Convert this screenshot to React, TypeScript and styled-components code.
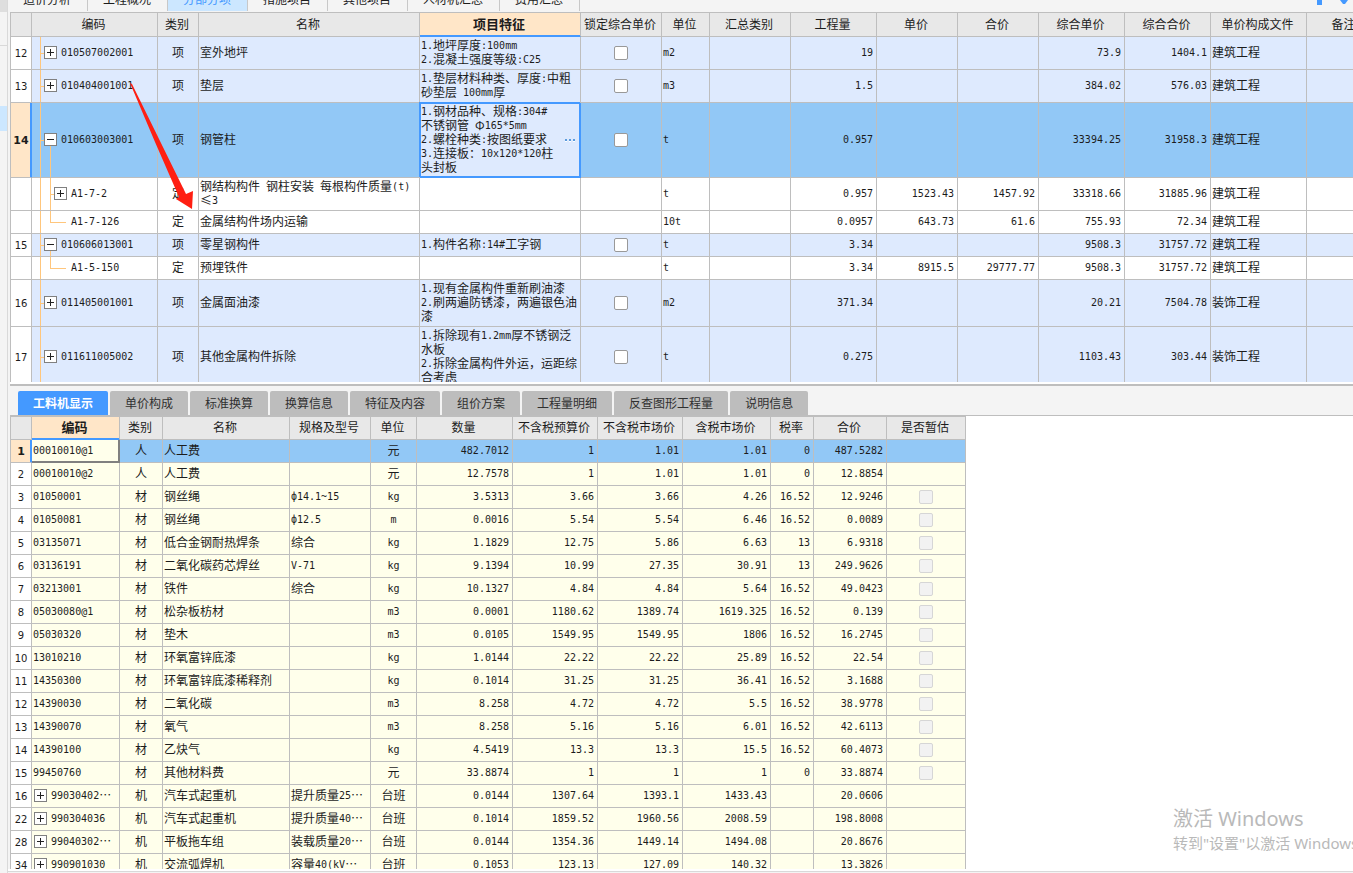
import React from "react";
import styled, { createGlobalStyle, css } from "styled-components";

const LINE = "#bebebe";
const BLUE = "#4499ff";
const TREE = "#ffc67c";
const PEACH = "#ffe6c8";
const CJK = '"Noto Sans CJK SC", sans-serif';
const MONO = '"DejaVu Sans Mono", "Liberation Mono", monospace';

const GlobalStyle = createGlobalStyle`
  * { box-sizing: border-box; }
  body {
    margin: 0;
    overflow: hidden;
    background: #f4f4f4;
    color: #1c1c1c;
    font: 12px/14px ${CJK};
  }
  button { font: inherit; color: inherit; border: 0; padding: 0; background: none; }
`;

/* ---------- page frame ---------- */

const Shell = styled.div`
  position: relative;
  display: flex;
  height: 100vh;
  overflow: hidden;
`;

const SideRail = styled.div`
  flex: 0 0 8px;
  border-right: 1px solid #d9d9d9;
  background: #f4f4f4;
`;

const RailBlock = styled.div<{ $h: number; $bg?: string; $line?: boolean }>`
  height: ${(p) => p.$h}px;
  background: ${(p) => p.$bg ?? "transparent"};
  border-bottom: ${(p) => (p.$line ? "1px solid #d9d9d9" : "0")};
`;

const Main = styled.main`
  flex: 1;
  min-width: 0;
  display: flex;
  flex-direction: column;
`;

const TopStrip = styled.div`
  flex: 0 0 12px;
  display: flex;
  justify-content: space-between;
  overflow: hidden;
`;

const TopTabs = styled.nav`
  display: flex;
  align-items: flex-end;
  height: 11px;
`;

const TopTab = styled.button<{ $active?: boolean }>`
  height: 24px;
  padding: 0 16px 0 15px;
  border-right: 1px solid #c8c8c8;
  background: ${(p) => (p.$active ? "#cce7ff" : "transparent")};
  color: ${(p) => (p.$active ? BLUE : "inherit")};
`;

const StripIcons = styled.svg`
  width: 36px;
  height: 8px;
`;

const UpperPane = styled.section`
  flex: 0 0 370px;
  margin-left: 2px;
  overflow: hidden;
  background: #fff;
`;

const Splitter = styled.div`
  flex: 0 0 4px;
  margin-left: 2px;
  border-top: 2px solid #fff;
  border-bottom: 2px solid ${LINE};
`;

const DetailTabs = styled.div`
  flex: 0 0 30px;
  display: flex;
  align-items: flex-end;
  gap: 2px;
  margin-left: 2px;
  padding: 5px 8px 0;
  border-bottom: 1px solid ${LINE};
`;

const DetailTab = styled.button<{ $active?: boolean }>`
  height: 24px;
  padding: 0 15px;
  border-radius: 2px 2px 0 0;
  background: ${(p) => (p.$active ? BLUE : "#bdbdbd")};
  color: ${(p) => (p.$active ? "#fff" : "#303030")};
  font-weight: ${(p) => (p.$active ? 700 : 400)};
`;

const LowerPane = styled.section`
  flex: 1;
  min-height: 0;
  margin-left: 2px;
  overflow: hidden;
  background: #fff;
`;

const StatusEdge = styled.footer`
  flex: 0 0 4px;
  border-top: 2px solid #fff;
  background: linear-gradient(#d9d9d9 1px, #f4f4f4 1px);
`;

/* ---------- tables ---------- */

const Grid = styled.table<{ $w: number }>`
  width: ${(p) => p.$w}px;
  table-layout: fixed;
  border-collapse: separate;
  border-spacing: 0;
  border-left: 1px solid ${LINE};
  border-top: 1px solid ${LINE};
`;

const Th = styled.th<{ $active?: boolean }>`
  height: 24px;
  padding: 0 2px 2px 0;
  border-right: 1px solid ${LINE};
  border-bottom: 1px solid ${LINE};
  background: #e8e8e8;
  font-weight: 400;
  white-space: nowrap;
  ${(p) =>
    p.$active &&
    css`
      border-bottom-color: ${BLUE};
      box-shadow: inset 0 -1px ${BLUE};
      background: ${PEACH};
      font-size: 13px;
      font-weight: 700;
    `}
`;

const LowerTh = styled(Th)`
  height: 23px;
`;

type Tone = "item" | "white" | "current" | "cream";
const TONES: Record<Tone, string> = {
  item: "#deeafe",
  white: "#ffffff",
  current: "#92c8f6",
  cream: "#ffffeb",
};

const Row = styled.tr<{ $tone: Tone }>`
  background: ${(p) => TONES[p.$tone]};
`;

const Td = styled.td<{ $align?: "left" | "center" | "right" }>`
  height: 23px;
  padding: ${(p) => (p.$align === "center" ? "1px 1px 3px" : "1px 3px 3px 1px")};
  border-right: 1px solid ${LINE};
  border-bottom: 1px solid ${LINE};
  overflow: hidden;
  white-space: pre;
  vertical-align: middle;
  text-align: ${(p) => p.$align ?? "left"};
`;

const CheckTd = styled(Td)`
  padding: 2px 1px;
`;

const RowNo = styled(Td)<{ $current?: boolean }>`
  padding: 3px 0 1px;
  text-align: center;
  background: ${(p) => (p.$current ? PEACH : "#fff")};
  font: ${(p) => (p.$current ? "700 11px" : "400 10px")} / 14px "DejaVu Sans", sans-serif;
  ${(p) =>
    p.$current &&
    css`
      border-right-color: ${BLUE};
      box-shadow: inset -1px 0 ${BLUE};
    `}
`;

const EditingTd = styled(Td)`
  position: relative;
  overflow: visible;
  background: #deeafe;
  border-color: ${BLUE};
  box-shadow: -1px -1px ${BLUE}, inset 0 0 0 1px ${BLUE};
`;

const EditingBody = styled.div`
  display: flex;
  align-items: center;
  justify-content: space-between;
`;

const MoreButton = styled.button`
  width: 14px;
  height: 14px;
  svg { display: block; }
`;

const FocusTd = styled(Td)`
  background: #ffffeb;
  border-color: #808080;
  box-shadow: inset -1px -1px #808080;
`;

const linesFor = {
  root: {
    image: 2,
    pos: "8px 0, 8px 50%",
    size: "1px 100%, 4px 1px",
  },
  open: {
    image: 3,
    pos: "8px 0, 8px 50%, 18px 100%",
    size: "1px 100%, 4px 1px, 1px 50%",
  },
  child: {
    image: 3,
    pos: "8px 0, 18px 0, 18px 50%",
    size: "1px 100%, 1px 100%, 4px 1px",
  },
  leaf: {
    image: 3,
    pos: "8px 0, 18px 0, 18px 50%",
    size: "1px 100%, 1px 50%, 16px 1px",
  },
};
type Node = keyof typeof linesFor;

const INDENT: Record<Node, number> = { root: 12, open: 12, child: 22, leaf: 39 };

const TreeTd = styled(Td)<{ $node: Node }>`
  padding-left: ${(p) => INDENT[p.$node]}px;
  background-image: ${(p) =>
    Array(linesFor[p.$node].image).fill(`linear-gradient(${TREE}, ${TREE})`).join(", ")};
  background-position: ${(p) => linesFor[p.$node].pos};
  background-size: ${(p) => linesFor[p.$node].size};
  background-repeat: no-repeat;
`;

const TreeLabel = styled.div<{ $inset?: boolean }>`
  display: flex;
  align-items: center;
  gap: 4px;
  padding-left: ${(p) => (p.$inset ? 1 : 0)}px;
`;

const ToggleButton = styled.button`
  flex: none;
  width: 13px;
  height: 13px;
  border: 1px solid #808080;
  background: #fff;
  svg { display: block; }
`;

const Check = styled.input`
  appearance: none;
  display: block;
  width: 14px;
  height: 14px;
  margin: 0 auto;
  border: 1px solid #999;
  border-radius: 2px;
  background: #fff;
  &:disabled {
    border-color: #d6d6d6;
    background: #f2f2f2;
  }
`;

const Latin = styled.span`
  font: 10px/10px ${MONO};
  vertical-align: 1px;
`;

const Ellipsis = styled.span`
  display: inline-block;
`;

/* ---------- overlays ---------- */

const Arrow = styled.svg`
  position: absolute;
  left: 128px;
  top: 80px;
  width: 70px;
  height: 132px;
  pointer-events: none;
`;

const Watermark = styled.aside`
  position: absolute;
  right: 0;
  bottom: 20px;
  width: 180px;
  overflow: hidden;
  white-space: nowrap;
  color: #b9b9b9;
  font: 15px/20px "Noto Sans", ${CJK};
`;

const WatermarkTitle = styled.div`
  font-size: 20px;
  line-height: 28px;
`;

/* ---------- small pieces ---------- */

function Text({ children }: { children: string }) {
  const parts = children.split(/([\x20-\x7eф]+|…)/).filter(Boolean);
  return (
    <>
      {parts.map((p, i) => {
        if (p === "…") return <Ellipsis key={i}>{p}</Ellipsis>;
        if (/^[\x20-\x7eф]/.test(p)) return <Latin key={i}>{p}</Latin>;
        return <React.Fragment key={i}>{p}</React.Fragment>;
      })}
    </>
  );
}

function Lines({ lines }: { lines: string[] }) {
  return (
    <div>
      {lines.map((l) => (
        <div key={l}>
          <Text>{l}</Text>
        </div>
      ))}
    </div>
  );
}

function Toggle({ open }: { open?: boolean }) {
  return (
    <ToggleButton aria-label={open ? "收起" : "展开"}>
      <svg width="11" height="11" viewBox="0 0 11 11" shapeRendering="crispEdges" fill="#222">
        <rect x="2" y="5" width="7" height="1" />
        {!open && <rect x="5" y="2" width="1" height="7" />}
      </svg>
    </ToggleButton>
  );
}

/* ---------- data ---------- */

const TOP_TABS = ["造价分析", "工程概况", "分部分项", "措施项目", "其他项目", "人材机汇总", "费用汇总"];

const UPPER_COLS: [string, number][] = [
  ["", 21], ["编码", 126], ["类别", 41], ["名称", 221], ["项目特征", 161], ["锁定综合单价", 81],
  ["单位", 48], ["汇总类别", 81], ["工程量", 86], ["单价", 81], ["合价", 81], ["综合单价", 86],
  ["综合合价", 86], ["单价构成文件", 96], ["备注", 76],
];

interface Item {
  no?: string;
  node: Node;
  code: string;
  name: string[];
  feature?: string[];
  unit: string;
  qty: string;
  price?: string;
  total?: string;
  unitAll: string;
  totalAll: string;
  file: string;
  current?: boolean;
}

const ITEMS: Item[] = [
  { no: "12", node: "root", code: "010507002001", name: ["室外地坪"], feature: ["1.地坪厚度:100mm", "2.混凝土强度等级:C25"], unit: "m2", qty: "19", unitAll: "73.9", totalAll: "1404.1", file: "建筑工程" },
  { no: "13", node: "root", code: "010404001001", name: ["垫层"], feature: ["1.垫层材料种类、厚度:中粗", "砂垫层 100mm厚"], unit: "m3", qty: "1.5", unitAll: "384.02", totalAll: "576.03", file: "建筑工程" },
  { no: "14", node: "open", code: "010603003001", name: ["钢管柱"], feature: ["1.钢材品种、规格:304#", "不锈钢管 Φ165*5mm", "2.螺栓种类:按图纸要求", "3.连接板：10x120*120柱", "头封板"], unit: "t", qty: "0.957", unitAll: "33394.25", totalAll: "31958.3", file: "建筑工程", current: true },
  { node: "child", code: "A1-7-2", name: ["钢结构构件 钢柱安装 每根构件质量(t)", "≤3"], unit: "t", qty: "0.957", price: "1523.43", total: "1457.92", unitAll: "33318.66", totalAll: "31885.96", file: "建筑工程" },
  { node: "leaf", code: "A1-7-126", name: ["金属结构件场内运输"], unit: "10t", qty: "0.0957", price: "643.73", total: "61.6", unitAll: "755.93", totalAll: "72.34", file: "建筑工程" },
  { no: "15", node: "open", code: "010606013001", name: ["零星钢构件"], feature: ["1.构件名称:14#工字钢"], unit: "t", qty: "3.34", unitAll: "9508.3", totalAll: "31757.72", file: "建筑工程" },
  { node: "leaf", code: "A1-5-150", name: ["预埋铁件"], unit: "t", qty: "3.34", price: "8915.5", total: "29777.77", unitAll: "9508.3", totalAll: "31757.72", file: "建筑工程" },
  { no: "16", node: "root", code: "011405001001", name: ["金属面油漆"], feature: ["1.现有金属构件重新刷油漆", "2.刷两遍防锈漆，两遍银色油", "漆"], unit: "m2", qty: "371.34", unitAll: "20.21", totalAll: "7504.78", file: "装饰工程" },
  { no: "17", node: "root", code: "011611005002", name: ["其他金属构件拆除"], feature: ["1.拆除现有1.2mm厚不锈钢泛", "水板", "2.拆除金属构件外运，运距综", "合考虑"], unit: "t", qty: "0.275", unitAll: "1103.43", totalAll: "303.44", file: "装饰工程" },
];

const DETAIL_TABS = ["工料机显示", "单价构成", "标准换算", "换算信息", "特征及内容", "组价方案", "工程量明细", "反查图形工程量", "说明信息"];

const LOWER_COLS: [string, number][] = [
  ["", 21], ["编码", 88], ["类别", 43], ["名称", 127], ["规格及型号", 81], ["单位", 46], ["数量", 96],
  ["不含税预算价", 85], ["不含税市场价", 85], ["含税市场价", 88], ["税率", 43], ["合价", 73], ["是否暂估", 79],
];

/* no, code, kind, name, spec, unit, quantity, budget, market, taxed, rate, total */
const RESOURCES: string[][] = [
  ["1", "00010010@1", "人", "人工费", "", "元", "482.7012", "1", "1.01", "1.01", "0", "487.5282"],
  ["2", "00010010@2", "人", "人工费", "", "元", "12.7578", "1", "1.01", "1.01", "0", "12.8854"],
  ["3", "01050001", "材", "钢丝绳", "ф14.1~15", "kg", "3.5313", "3.66", "3.66", "4.26", "16.52", "12.9246"],
  ["4", "01050081", "材", "钢丝绳", "ф12.5", "m", "0.0016", "5.54", "5.54", "6.46", "16.52", "0.0089"],
  ["5", "03135071", "材", "低合金钢耐热焊条", "综合", "kg", "1.1829", "12.75", "5.86", "6.63", "13", "6.9318"],
  ["6", "03136191", "材", "二氧化碳药芯焊丝", "V-71", "kg", "9.1394", "10.99", "27.35", "30.91", "13", "249.9626"],
  ["7", "03213001", "材", "铁件", "综合", "kg", "10.1327", "4.84", "4.84", "5.64", "16.52", "49.0423"],
  ["8", "05030080@1", "材", "松杂板枋材", "", "m3", "0.0001", "1180.62", "1389.74", "1619.325", "16.52", "0.139"],
  ["9", "05030320", "材", "垫木", "", "m3", "0.0105", "1549.95", "1549.95", "1806", "16.52", "16.2745"],
  ["10", "13010210", "材", "环氧富锌底漆", "", "kg", "1.0144", "22.22", "22.22", "25.89", "16.52", "22.54"],
  ["11", "14350300", "材", "环氧富锌底漆稀释剂", "", "kg", "0.1014", "31.25", "31.25", "36.41", "16.52", "3.1688"],
  ["12", "14390030", "材", "二氧化碳", "", "m3", "8.258", "4.72", "4.72", "5.5", "16.52", "38.9778"],
  ["13", "14390070", "材", "氧气", "", "m3", "8.258", "5.16", "5.16", "6.01", "16.52", "42.6113"],
  ["14", "14390100", "材", "乙炔气", "", "kg", "4.5419", "13.3", "13.3", "15.5", "16.52", "60.4073"],
  ["15", "99450760", "材", "其他材料费", "", "元", "33.8874", "1", "1", "1", "0", "33.8874"],
  ["16", "99030402…", "机", "汽车式起重机", "提升质量25…", "台班", "0.0144", "1307.64", "1393.1", "1433.43", "", "20.0606"],
  ["22", "990304036", "机", "汽车式起重机", "提升质量40…", "台班", "0.1014", "1859.52", "1960.56", "2008.59", "", "198.8008"],
  ["28", "99040302…", "机", "平板拖车组", "装载质量20…", "台班", "0.0144", "1354.36", "1449.14", "1494.08", "", "20.8676"],
  ["34", "990901030", "机", "交流弧焊机", "容量40(kV…", "台班", "0.1053", "123.13", "127.09", "140.32", "", "13.3826"],
];

const sum = (cols: [string, number][]) => cols.reduce((n, c) => n + c[1], 1);

function Columns({ cols }: { cols: [string, number][] }) {
  return (
    <colgroup>
      {cols.map(([label, w]) => (
        <col key={label} width={w} />
      ))}
    </colgroup>
  );
}

function ItemRow({ item }: { item: Item }) {
  const child = item.node === "child" || item.node === "leaf";
  const tone: Tone = item.current ? "current" : item.no ? "item" : "white";
  return (
    <Row $tone={tone}>
      <RowNo $current={item.current}>{item.no}</RowNo>
      <TreeTd $node={item.node}>
        <TreeLabel>
          {item.node !== "leaf" && <Toggle open={item.node === "open"} />}
          <span>
            <Text>{item.code}</Text>
          </span>
        </TreeLabel>
      </TreeTd>
      <Td $align="center">{child ? "定" : "项"}</Td>
      <Td>
        <Lines lines={item.name} />
      </Td>
      {item.current ? (
        <EditingTd>
          <EditingBody>
            <Lines lines={item.feature ?? []} />
            <MoreButton aria-label="编辑项目特征">
              <svg width="14" height="14" viewBox="0 0 14 14" shapeRendering="crispEdges">
                {[2, 6, 10].map((x) => (
                  <React.Fragment key={x}>
                    <rect x={x} y="7" width="2" height="2" fill="#5b9bdc" />
                    <rect x={x} y="9" width="2" height="1" fill="#fff" />
                  </React.Fragment>
                ))}
              </svg>
            </MoreButton>
          </EditingBody>
        </EditingTd>
      ) : (
        <Td>{item.feature && <Lines lines={item.feature} />}</Td>
      )}
      <CheckTd>{!child && <Check type="checkbox" aria-label={`锁定综合单价 ${item.code}`} />}</CheckTd>
      <Td>
        <Text>{item.unit}</Text>
      </Td>
      <Td />
      {[item.qty, item.price ?? "", item.total ?? "", item.unitAll, item.totalAll].map((v, i) => (
        <Td key={i} $align="right">
          <Text>{v}</Text>
        </Td>
      ))}
      <Td>{item.file}</Td>
      <Td />
    </Row>
  );
}

function ResourceRow({ data, current }: { data: string[]; current: boolean }) {
  const [no, code, kind, name, spec, unit, ...numbers] = data;
  const CodeCell = current ? FocusTd : Td;
  const machine = kind === "机";
  return (
    <Row $tone={current ? "current" : "cream"}>
      <RowNo $current={current}>{no}</RowNo>
      <CodeCell>
        <TreeLabel $inset={machine}>
          {machine && <Toggle />}
          <span>
            <Text>{code}</Text>
          </span>
        </TreeLabel>
      </CodeCell>
      <Td $align="center">{kind}</Td>
      <Td>{name}</Td>
      <Td>
        <Text>{spec}</Text>
      </Td>
      <Td $align="center">
        <Text>{unit}</Text>
      </Td>
      {numbers.map((v, i) => (
        <Td key={i} $align="right">
          <Text>{v}</Text>
        </Td>
      ))}
      <CheckTd>{kind === "材" && <Check type="checkbox" disabled aria-label={`是否暂估 ${code}`} />}</CheckTd>
    </Row>
  );
}

export default function App() {
  return (
    <Shell lang="zh-CN">
      <GlobalStyle />
      <SideRail>
        <RailBlock $h={12} $bg="#dedede" />
        <RailBlock $h={34} $line />
        <RailBlock $h={60} />
        <RailBlock $h={25} $bg="#cce7ff" />
      </SideRail>
      <Main>
        <TopStrip>
          <TopTabs>
            {TOP_TABS.map((t) => (
              <TopTab key={t} $active={t === "分部分项"}>
                {t}
              </TopTab>
            ))}
          </TopTabs>
          <StripIcons viewBox="0 0 36 8" fill={BLUE}>
            <rect x="0" y="0" width="5" height="5" />
            <path d="M23 0h8l-3 4h-2z" />
          </StripIcons>
        </TopStrip>
        <UpperPane>
          <Grid $w={sum(UPPER_COLS)}>
            <Columns cols={UPPER_COLS} />
            <thead>
              <tr>
                {UPPER_COLS.map(([label]) => (
                  <Th key={label} $active={label === "项目特征"}>
                    {label}
                  </Th>
                ))}
              </tr>
            </thead>
            <tbody>
              {ITEMS.map((item) => (
                <ItemRow key={item.code} item={item} />
              ))}
            </tbody>
          </Grid>
        </UpperPane>
        <Splitter />
        <DetailTabs>
          {DETAIL_TABS.map((t, i) => (
            <DetailTab key={t} $active={i === 0}>
              {t}
            </DetailTab>
          ))}
        </DetailTabs>
        <LowerPane>
          <Grid $w={sum(LOWER_COLS)}>
            <Columns cols={LOWER_COLS} />
            <thead>
              <tr>
                {LOWER_COLS.map(([label]) => (
                  <LowerTh key={label} $active={label === "编码"}>
                    {label}
                  </LowerTh>
                ))}
              </tr>
            </thead>
            <tbody>
              {RESOURCES.map((r, i) => (
                <ResourceRow key={r[0]} data={r} current={i === 0} />
              ))}
            </tbody>
          </Grid>
        </LowerPane>
        <StatusEdge />
      </Main>
      <Arrow viewBox="128 80 70 132" fill="#ff1f12">
        <path d="M130 83L132 84L186 194L193 191L192 209L176 199L179 197L155 142Z" />
      </Arrow>
      <Watermark>
        <WatermarkTitle>激活 Windows</WatermarkTitle>
        转到"设置"以激活 Windows。
      </Watermark>
    </Shell>
  );
}
